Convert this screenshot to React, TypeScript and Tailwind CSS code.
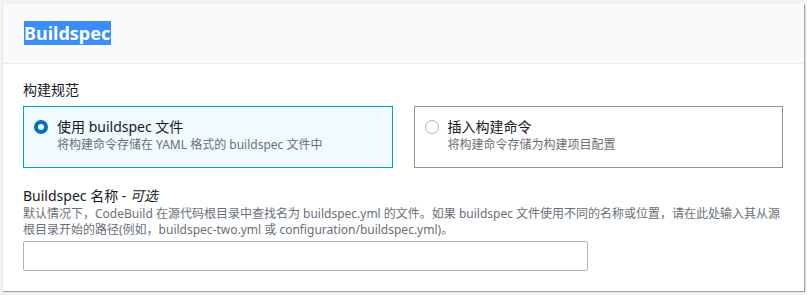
export default function App() {
  return (
    <div className="min-h-[295px] bg-[#f2f3f3] pt-1 pb-1 pl-[2px] pr-[3px] font-['Noto_Sans','Noto_Sans_CJK_SC',sans-serif] text-[#16191f]">
      <div className="bg-white border-l border-[#e4e7e7] shadow-[1px_1px_1px_0_rgba(0,28,36,0.35)]">
        <div className="bg-[#fafafa] border-b border-[#eaeded] pl-[21px] pt-[19px] pb-[19px]">
          <h2 className="text-[18px] leading-[21px] font-bold">
            <span className="bg-[#3a8efa] text-white pr-[1px]">Buildspec</span>
          </h2>
        </div>
        <div className="pl-[20px] pr-[21px] pt-[16px] pb-[20px]">
          <div className="text-[14px] leading-[20px]">构建规范</div>
          <div className="mt-[6px] grid grid-cols-2 gap-[21px]">
            <label className="flex items-start border border-[#00a1c9] bg-[#f1faff] pl-[10px] pt-[10px] pb-[14px] h-[62px]">
              <span className="mt-[3px] w-[14px] h-[14px] rounded-full bg-[#0073bb] flex items-center justify-center shrink-0">
                <span className="w-[6px] h-[6px] rounded-full bg-white" />
              </span>
              <span className="ml-[9px] flex flex-col">
                <span className="text-[14px] leading-[20px]">使用 buildspec 文件</span>
                <span className="text-[12px] leading-[16px] text-[#687078]">将构建命令存储在 YAML 格式的 buildspec 文件中</span>
              </span>
            </label>
            <label className="flex items-start border border-[#879596] bg-white pl-[10px] pt-[10px] pb-[14px] h-[62px]">
              <span className="mt-[3px] w-[14px] h-[14px] rounded-full border border-[#aab7b8] bg-white shrink-0" />
              <span className="ml-[9px] flex flex-col">
                <span className="text-[14px] leading-[20px]">插入构建命令</span>
                <span className="text-[12px] leading-[16px] text-[#687078]">将构建命令存储为构建项目配置</span>
              </span>
            </label>
          </div>
          <div className="mt-[18px] text-[14px] leading-[20px]">
            Buildspec 名称 - <i>可选</i>
          </div>
          <p className="text-[12px] leading-[16px] text-[#687078]">
            默认情况下，CodeBuild 在源代码根目录中查找名为 buildspec.yml 的文件。如果 buildspec 文件使用不同的名称或位置，请在此处输入其从源根目录开始的路径(例如，buildspec-two.yml 或 configuration/buildspec.yml)。
          </p>
          <input
            type="text"
            className="mt-[3px] block w-[565px] h-[30px] border border-[#aab7b8] rounded-[2px] bg-white px-2 text-[14px] outline-none"
          />
        </div>
      </div>
    </div>
  );
}
